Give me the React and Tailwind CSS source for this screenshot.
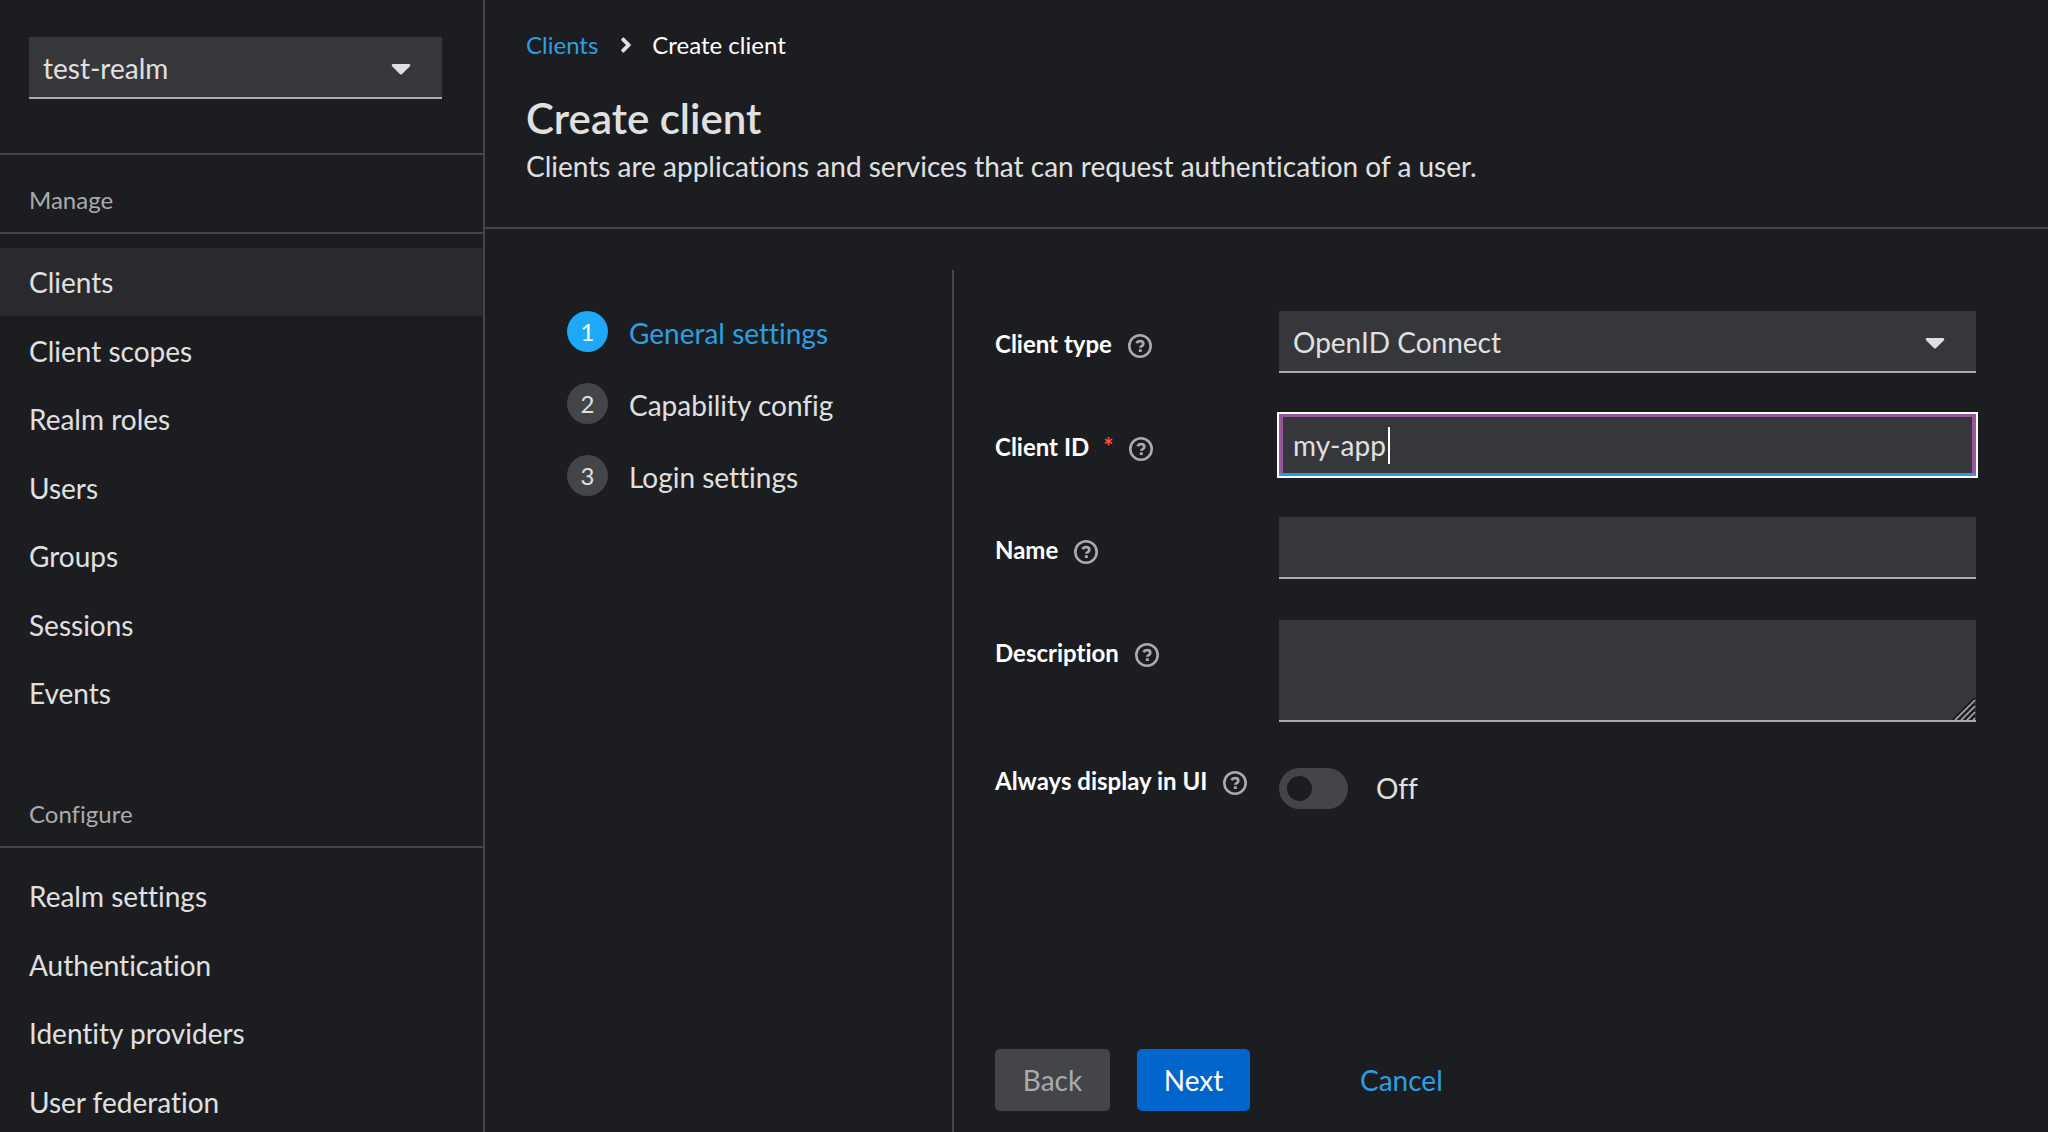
import React, { useState } from 'react';
import { FaAngleRight, FaCaretDown } from 'react-icons/fa';

const manageItems = ['Clients', 'Client scopes', 'Realm roles', 'Users', 'Groups', 'Sessions', 'Events'];
const configureItems = ['Realm settings', 'Authentication', 'Identity providers', 'User federation'];
const steps = ['General settings', 'Capability config', 'Login settings'];

const HelpIcon = () => (
  <svg viewBox="0 0 24 24" className="size-6" fill="none" aria-hidden="true">
    <circle cx="12" cy="12" r="10.7" stroke="currentColor" strokeWidth="2.6" />
    <path
      d="M8.6 9.2C9.2 7.8 10.5 7.1 12.1 7.1c1.9 0 3.2 1.1 3.2 2.6 0 1.2-.7 1.9-1.7 2.5-.9.5-1.3.8-1.3 1.6"
      stroke="currentColor"
      strokeWidth="2.7"
    />
    <rect x="10.8" y="15.2" width="3" height="2.8" rx="0.5" fill="currentColor" />
  </svg>
);

const ResizeGrip = () => (
  <svg viewBox="0 0 24 24" className="pointer-events-none absolute right-0 bottom-[2px] size-6" fill="none" aria-hidden="true">
    <path d="M1 24 23 2M7 24 23 8M13 24l10-10M19 24l4-4" stroke="#161719" strokeWidth="2" />
    <path d="M3 24 23 4M9 24l14-14M15 24l8-8M21 24l2-2" stroke="#b4b5b7" strokeWidth="1.4" />
  </svg>
);

const SelectBox = ({ id, label, options }) => (
  <div className="relative">
    <select
      id={id}
      aria-label={label}
      className="block h-[62px] w-full appearance-none border-b-2 border-[#aaabac] bg-[#36373a] pt-[2px] pr-16 pl-[14px] text-[28px] text-[#e0e0e0] outline-none"
    >
      {options.map((option) => (
        <option key={option}>{option}</option>
      ))}
    </select>
    <FaCaretDown className="pointer-events-none absolute top-[15px] right-[25px] size-8 text-[#e0e0e0]" />
  </div>
);

const NavSection = ({ title, items, active }) => (
  <section>
    <h2 className="border-b-2 border-[#444548] px-[29px] pt-[27px] pb-[14px] text-[24px] leading-[36px] text-[#aaabac]">
      {title}
    </h2>
    <ul className="mt-[14px]">
      {items.map((item) => (
        <li key={item} className={item === active ? 'bg-[#292a2d]' : 'even:pt-px'}>
          <a href="#" className="block px-[29px] py-[13px] text-[28px] leading-[42px] text-[#e0e0e0]">
            {item}
          </a>
        </li>
      ))}
    </ul>
  </section>
);

const FormRow = ({ id, label, required, children }) => (
  <div className="grid grid-cols-[284px_minmax(0,1fr)] items-start">
    <div className="flex items-center pt-[15px] text-white">
      <label htmlFor={id} className="text-[24px] font-bold leading-[36px]">
        {label}
        {required && <span className="ml-[14px] text-[#fe5142]">*</span>}
      </label>
      <button type="button" aria-label={`More info for ${label}`} className="mt-1 ml-4 text-[#aaabac]">
        <HelpIcon />
      </button>
    </div>
    {children}
  </div>
);

export default function App() {
  const [clientId, setClientId] = useState('my-app');
  const [alwaysDisplay, setAlwaysDisplay] = useState(false);

  return (
    <div className="flex h-screen overflow-hidden bg-[#1c1d20] font-[Lato,sans-serif] text-[#e0e0e0] [font-variant-ligatures:none]">
      {/* Sidebar */}
      <nav className="w-[485px] shrink-0 overflow-hidden border-r-2 border-[#444548]">
        <div className="border-b-2 border-[#444548] pt-[37px] pr-[41px] pb-[54px] pl-[29px]">
          <SelectBox id="realm" label="Realm" options={['test-realm']} />
        </div>
        <NavSection title="Manage" items={manageItems} active="Clients" />
        <div className="mt-[42px]">
          <NavSection title="Configure" items={configureItems} />
        </div>
      </nav>

      <main className="flex min-w-0 flex-1 flex-col">
        {/* Page header */}
        <header className="border-b-2 border-[#444548] px-[41px] pt-[27px] pb-[40px]">
          <nav aria-label="Breadcrumb" className="flex items-center text-[24px] leading-[36px]">
            <a href="#" className="text-[#2b9fe3]">Clients</a>
            <FaAngleRight className="mr-[14px] ml-4 size-6" />
            <span className="text-white">Create client</span>
          </nav>
          <h1 className="mt-[28px] text-[42px] font-semibold leading-[54px]">Create client</h1>
          <p className="text-[28px] leading-[42px]">
            Clients are applications and services that can request authentication of a user.
          </p>
        </header>

        <div className="flex flex-1">
          {/* Wizard steps */}
          <ol className="mt-[41px] flex w-[469px] shrink-0 flex-col gap-[27px] border-r-2 border-[#444548] pt-[39px] pl-[82px]">
            {steps.map((step, index) => (
              <li key={step}>
                <button type="button" className="flex items-center gap-[21px] text-[28px] leading-[41px]">
                  <span
                    className={`flex size-[41px] items-center justify-center rounded-full text-[24px] ${
                      index === 0 ? 'bg-[#1fa7f8] text-white' : 'bg-[#444548]'
                    }`}
                  >
                    {index + 1}
                  </span>
                  <span className={`pt-1 ${index === 0 ? 'text-[#2b9fe3]' : ''}`}>{step}</span>
                </button>
              </li>
            ))}
          </ol>

          {/* General settings form */}
          <form className="flex min-w-0 flex-1 flex-col justify-between pt-[82px] pr-[72px] pb-[21px] pl-[41px]">
            <div className="flex flex-col gap-[41px]">
              <FormRow id="client-type" label="Client type">
                <SelectBox id="client-type" label="Client type" options={['OpenID Connect', 'SAML']} />
              </FormRow>
              <FormRow id="client-id" label="Client ID" required>
                <div className="relative">
                  <input
                    id="client-id"
                    type="text"
                    value={clientId}
                    onChange={(e) => setClientId(e.target.value)}
                    className="block h-[62px] w-full bg-[#36373a] px-[14px] text-[28px] shadow-[inset_0_-3px_#2b9ad6,inset_4px_3px_#96589a,inset_-4px_3px_#96589a] outline-2 outline-white"
                  />
                  <span className="absolute top-[13px] left-[109px] h-[37px] w-[2px] bg-white" />
                </div>
              </FormRow>
              <FormRow id="name" label="Name">
                <input
                  id="name"
                  type="text"
                  className="block h-[62px] w-full border-b-2 border-[#aaabac] bg-[#36373a] px-[14px] text-[28px] outline-none"
                />
              </FormRow>
              <FormRow id="description" label="Description">
                <div className="relative">
                  <textarea
                    id="description"
                    className="block h-[102px] w-full resize-none border-b-2 border-[#aaabac] bg-[#36373a] px-[14px] py-2 text-[28px] outline-none"
                  />
                  <ResizeGrip />
                </div>
              </FormRow>
              <div className="grid grid-cols-[284px_minmax(0,1fr)] items-start">
                <div className="flex items-center">
                  <label htmlFor="always-display" className="text-[24px] font-bold leading-[36px] text-white">
                    Always display in UI
                  </label>
                  <button type="button" aria-label="More info for Always display in UI" className="mt-1 ml-4 text-[#aaabac]">
                    <HelpIcon />
                  </button>
                </div>
                <label className="mt-1 flex items-center gap-[28px] text-[28px] leading-[42px]">
                  <input
                    id="always-display"
                    type="checkbox"
                    role="switch"
                    checked={alwaysDisplay}
                    onChange={(e) => setAlwaysDisplay(e.target.checked)}
                    className="h-[41px] w-[69px] appearance-none rounded-full bg-[#444548] p-2 before:block before:size-[25px] before:rounded-full before:bg-[#1c1d20] checked:bg-[#1fa7f8] checked:before:ml-auto"
                  />
                  {alwaysDisplay ? 'On' : 'Off'}
                </label>
              </div>
            </div>

            <div className="flex text-[28px] leading-[42px]">
              <button type="button" disabled className="h-[62px] w-[115px] rounded-[5px] bg-[#444548] text-[#aaabac]">
                Back
              </button>
              <button type="submit" className="ml-[27px] h-[62px] w-[113px] rounded-[5px] bg-[#0066cc] text-white">
                Next
              </button>
              <button type="button" className="ml-[82px] h-[62px] px-[28px] text-[#2b9fe3]">
                Cancel
              </button>
            </div>
          </form>
        </div>
      </main>
    </div>
  );
}
